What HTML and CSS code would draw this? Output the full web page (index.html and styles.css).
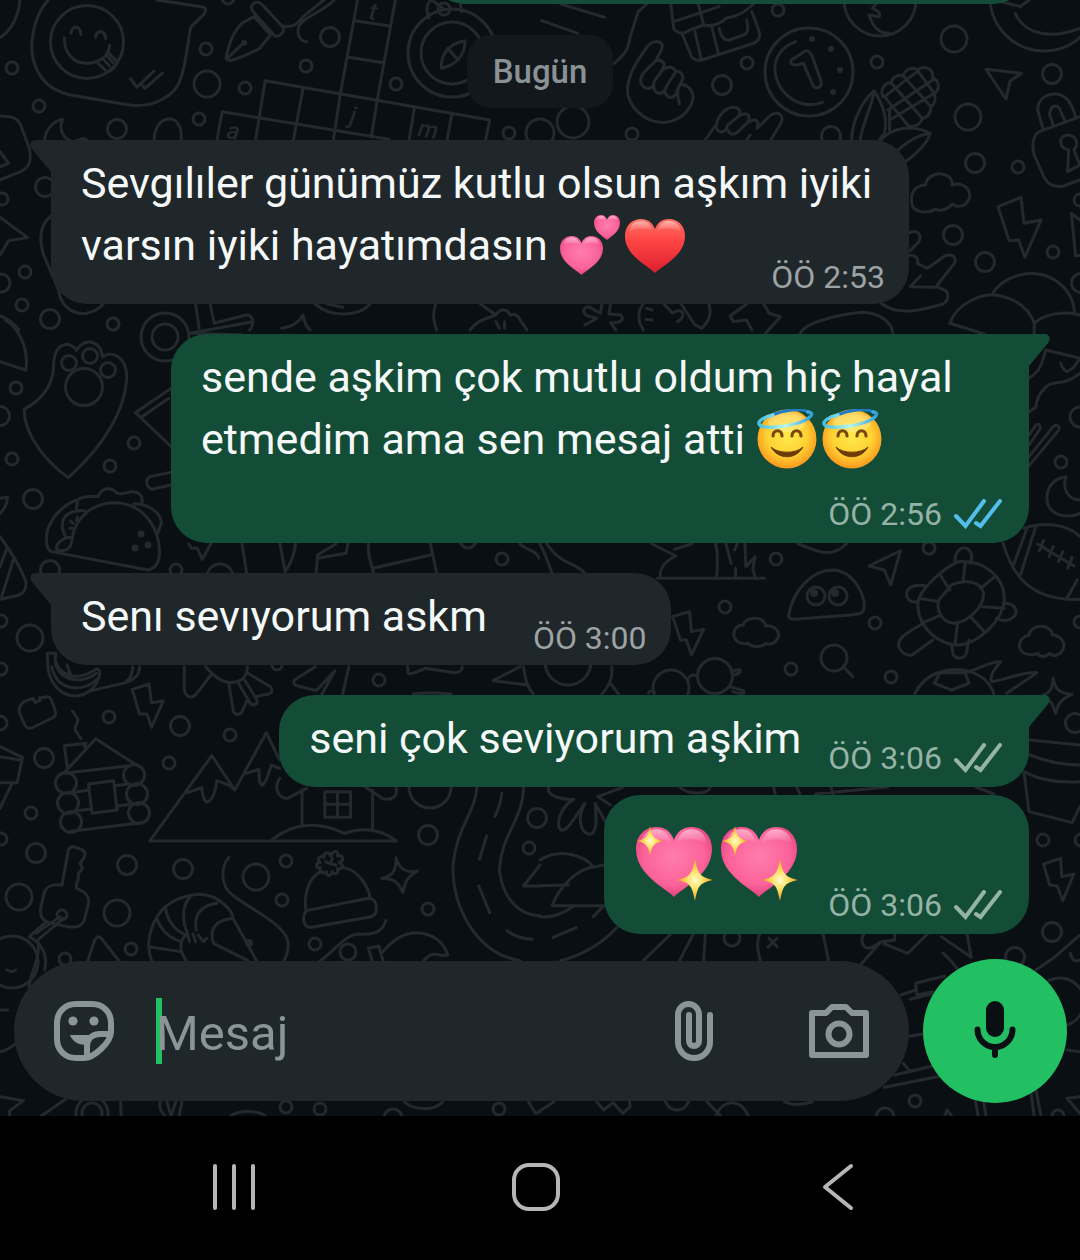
FILE: index.html
```html
<!DOCTYPE html>
<html lang="tr">
<head>
    <meta charset="UTF-8">
    <meta name="viewport" content="width=device-width, initial-scale=1.0">
    <title>Sohbet</title>
    <link rel="stylesheet" href="styles.css">
</head>
<body>
    <!-- Shared emoji and icon shapes -->
    <svg class="sprite" aria-hidden="true">
        <defs>
            <radialGradient id="pinkFill" cx="50%" cy="42%" r="62%">
                <stop offset="0" stop-color="#ff7dab"/>
                <stop offset="0.65" stop-color="#fb639a"/>
                <stop offset="1" stop-color="#e03a78"/>
            </radialGradient>
            <linearGradient id="redFill" x1="0" y1="0" x2="0" y2="1">
                <stop offset="0" stop-color="#ff6f63"/>
                <stop offset="0.4" stop-color="#ff4545"/>
                <stop offset="1" stop-color="#dc1f2e"/>
            </linearGradient>
            <linearGradient id="shine" x1="0" y1="0" x2="0" y2="1">
                <stop offset="0" stop-color="#fff" stop-opacity="0.5"/>
                <stop offset="1" stop-color="#fff" stop-opacity="0"/>
            </linearGradient>
            <radialGradient id="faceFill" cx="50%" cy="45%" r="56%">
                <stop offset="0" stop-color="#ffe94a"/>
                <stop offset="0.6" stop-color="#ffd233"/>
                <stop offset="1" stop-color="#f9951c"/>
            </radialGradient>
            <radialGradient id="starFill">
                <stop offset="0" stop-color="#fffbd0"/>
                <stop offset="0.4" stop-color="#ffe36b"/>
                <stop offset="1" stop-color="#eda11c"/>
            </radialGradient>
            <linearGradient id="haloFill" x1="0" y1="0" x2="1" y2="0">
                <stop offset="0" stop-color="#45bfe0"/>
                <stop offset="0.5" stop-color="#b8f6ea"/>
                <stop offset="1" stop-color="#2f9fdc"/>
            </linearGradient>
        </defs>
        <symbol id="heart" viewBox="0 0 100 92" preserveAspectRatio="none">
            <path d="M50 92C42 82 0 64 0 29C0 11 12 0 27 0C38 0 46 6 50 17C54 6 62 0 73 0C88 0 100 11 100 29C100 64 58 82 50 92Z"/>
        </symbol>
        <symbol id="heartShine" viewBox="0 0 100 92" preserveAspectRatio="none">
            <path fill="url(#shine)" d="M7 22C8 9 17 3 27 3C37 3 43 9 46 20C34 14 18 15 7 22ZM54 20C57 9 63 3 73 3C83 3 92 9 93 22C82 15 66 14 54 20Z"/>
        </symbol>
        <symbol id="twoHearts" viewBox="0 0 65 60">
            <g fill="url(#pinkFill)">
                <use href="#heart" x="2" y="21" width="43" height="39"/>
                <use href="#heart" x="36" y="0" width="26" height="25"/>
            </g>
            <use href="#heartShine" x="2" y="21" width="43" height="39"/>
            <use href="#heartShine" x="36" y="0" width="26" height="25"/>
        </symbol>
        <symbol id="redHeart" viewBox="0 0 65 60">
            <use href="#heart" fill="url(#redFill)" x="2" y="4" width="60" height="54"/>
            <use href="#heartShine" x="2" y="4" width="60" height="54"/>
        </symbol>
        <symbol id="angel" viewBox="0 0 65 60">
            <circle cx="31" cy="30" r="29.5" fill="url(#faceFill)"/>
            <ellipse cx="31" cy="13" rx="19" ry="10" fill="#fff" opacity="0.25"/>
            <path d="M17 27C17 20 26 20 26 27M36 27C36 20 45 20 45 27" fill="none" stroke="#7a4708" stroke-width="3.2" stroke-linecap="round"/>
            <path d="M15 38C22 51 40 51 47 38C40 45 22 45 15 38Z" fill="#6b3c05" stroke="#6b3c05" stroke-linejoin="round"/>
            <path d="M16 6C28 1 44 -1 53 3" fill="none" stroke="#1f7cc4" stroke-width="3"/>
            <path d="M52 3C60 4 54 10 42 14C26 19 5 20 3 15C2 12 8 8 17 6" fill="none" stroke="url(#haloFill)" stroke-width="3.4" stroke-linecap="round"/>
        </symbol>
        <symbol id="sparklingHeart" viewBox="0 0 85 80">
            <use href="#heart" fill="url(#pinkFill)" x="2" y="4" width="76" height="70"/>
            <use href="#heartShine" x="2" y="4" width="76" height="70"/>
            <path fill="url(#starFill)" d="M16 3C18 14 20 16 29 18C20 20 18 22 16 33C14 22 12 20 3 18C12 16 14 14 16 3Z"/>
            <path fill="url(#starFill)" d="M61 36C64 51 66 54 79 57C66 60 64 62 61 78C58 62 56 60 43 57C56 54 58 51 61 36Z"/>
        </symbol>
        <symbol id="ticks" viewBox="0 0 48 30">
            <path d="M2 17L11.5 27L30 2M22 24L26.5 27L46 2" fill="none" stroke="currentColor" stroke-width="4" stroke-linecap="round"/>
        </symbol>
    </svg>

    <main class="chat">
        <svg class="wallpaper" viewBox="0 0 1080 1116" preserveAspectRatio="xMidYMax slice" aria-hidden="true">
            <g id="bubbles"></g>

            <g transform="scale(.3444 .3333)">
                <path d="M140 0C105 40 95 90 92 135C92 210 130 270 205 285L375 315C440 325 510 290 525 235C540 190 545 130 552 90L555 80L593 42C600 30 598 22 585 20L455 0"/>
                <path d="M206 100C210 75 232 75 235 103M277 112C282 88 303 88 307 116M187 113C185 160 215 190 250 190C290 190 318 165 318 135M285 190L310 215C325 215 340 195 340 185L312 155M300 178L318 198M308 165L328 188"/>
                <path d="M379 236L397 262L447 213M414 256L421 265L472 219M58 0C55 50 30 95 0 113"/>
                <path d="M657 170C665 130 680 90 705 68L738 50L785 105L752 147C725 160 695 175 672 181C660 182 655 178 657 170ZM663 172L702 134M735 12C745 2 757 8 765 18L822 82C828 95 812 112 798 108L735 35C728 27 728 18 735 12ZM825 78C850 85 865 70 880 50L940 0M970 0C940 35 880 50 867 80C862 105 870 122 890 125"/>
                <path d="M1038 0L988 283L968 420M1148 0L1095 302L1078 412M1030 62L1132 78M1012 172L1113 188M770 242L1422 360L1410 420M770 242L742 420M880 265L852 420M645 335L1130 418M645 335L630 420M1203 323L1188 420M1312 343L1298 420"/>
                <path d="M1245 55C1235 25 1240 5 1255 0M1340 35L1335 0M1260 5L1290 28M1282 205C1278 170 1300 130 1350 122C1350 160 1335 190 1282 205ZM1300 145L1330 180"/>
                <path d="M130 420C130 395 150 365 182 358C168 390 185 420 215 425L240 415L252 420M447 420C450 370 475 355 495 357C520 360 528 390 526 420"/>
                <path d="M0 348C30 348 50 352 60 375L85 445C92 480 88 500 60 515L0 540M0 455L25 490L0 500M0 652L80 713L25 722L0 765M148 648C120 670 112 710 125 760L170 870C175 920 215 945 250 940C275 935 290 925 300 912M0 948C20 955 40 970 55 990"/>
                <path d="M568 912L578 985M610 912L622 970L715 945C735 945 740 970 725 990M550 1000L700 1004M818 985C850 980 870 965 880 945C883 965 888 980 900 990M915 912C960 955 1040 950 1075 912M950 912L995 922M1265 912C1255 940 1260 970 1268 990M1365 990C1390 955 1420 955 1440 945C1450 925 1475 925 1480 945C1500 940 1505 950 1510 960L1530 990M1395 912L1440 945M1440 965L1450 985M1465 965V985"/>
            </g>

            <g transform="translate(540 0) scale(.3444 .3333)">
                <path d="M60 12L188 52M5 62L110 100M215 190C250 160 255 150 262 110L285 35L310 12"/>
                <path d="M305 150C270 200 250 240 255 285C270 340 320 370 365 367C410 360 440 330 445 290C440 262 420 250 405 255M305 150C320 122 345 118 355 135C355 155 340 170 335 183C320 200 290 220 292 245C300 270 325 272 330 250C335 230 365 210 360 190C350 178 340 180 335 183M330 250C328 280 350 290 362 270C370 250 385 230 395 215C385 195 365 200 350 215M362 270C365 295 385 300 395 280C400 262 415 245 415 230C410 215 400 212 395 215M405 255C395 275 400 295 405 312"/>
                <path d="M380 12L388 85C400 105 425 100 435 90L475 75C500 80 520 75 540 55C570 50 590 40 620 12M388 65L520 20M460 12L475 75M412 100L440 170C445 180 455 182 470 180L620 130C638 120 640 110 635 90L615 35M450 95L468 178M498 78L518 162M520 85C525 110 535 122 550 120L595 103C605 98 606 85 600 60"/>
                <path d="M742 125C690 145 675 190 685 230C700 290 760 330 820 307M730 180L770 153C778 150 785 158 790 168L815 240C822 262 800 272 792 255L765 190L745 195C730 195 725 188 730 180Z"/>
                <path d="M480 420L510 375M512 385C510 350 540 320 565 322C580 325 585 335 575 350C605 330 615 350 600 370C620 355 640 355 630 385L670 345C690 332 710 345 700 368L670 420M512 385C525 405 540 395 545 375L575 350M545 390C550 405 565 405 575 395L600 370M610 405L600 420"/>
                <path d="M955 45C970 90 990 100 1015 100M955 45L985 50C990 40 980 30 965 25L975 12M1380 40C1410 110 1490 115 1568 85M1320 0L1395 20L1420 0"/>
                <path d="M995 290C985 260 1010 245 1020 250C1020 230 1045 222 1055 228C1060 205 1085 200 1095 210C1115 195 1145 205 1140 235C1160 240 1162 270 1145 280C1150 300 1145 315 1135 320C1135 345 1120 355 1110 355C1105 375 1085 382 1070 378M1000 290L1070 378M1020 250L1110 355M1055 228L1135 320M1095 210L1145 280M1095 215L1000 290M1140 240L1010 330M1145 280L1015 360"/>
                <path d="M905 420C905 370 930 310 970 272C1000 320 1010 360 1000 400L985 420M970 272C965 320 935 370 930 420M990 420C1020 385 1080 370 1133 400C1125 430 1090 465 1060 485M1015 390V330M1133 400C1090 405 1060 430 1035 455"/>
                <path d="M1295 208L1398 220L1365 243L1353 297Z"/>
                <path d="M1460 385L1445 330C1445 290 1480 280 1500 282C1530 285 1545 310 1555 350M1490 375L1480 345C1480 315 1505 310 1510 330L1525 365M1568 350L1450 395C1430 405 1428 440 1435 465L1465 535C1480 560 1500 562 1520 558L1568 540M1532 515L1535 450C1510 445 1500 410 1530 405C1560 405 1565 435 1550 450L1568 495L1532 515"/>
                <path d="M1120 555C1120 530 1150 520 1165 522C1190 525 1198 540 1197 555C1225 545 1250 565 1248 590C1240 620 1215 625 1197 612C1185 630 1160 635 1148 627C1130 640 1095 640 1082 620C1070 580 1090 555 1120 555Z"/>
                <path d="M1330 620L1397 592L1405 670L1455 660L1408 772L1390 720L1362 722ZM1568 660L1543 640L1555 768L1568 765"/>
                <path d="M1070 700C1095 685 1110 705 1100 725L1075 752M1070 765C1095 765 1100 780 1095 790L1125 805L1175 768C1200 758 1210 775 1203 790L1150 860L1175 870C1190 880 1185 905 1170 912C1110 930 1040 950 990 910M1105 828L1075 860L1150 862"/>
                <path d="M1312 885C1340 830 1420 805 1480 832C1530 855 1550 900 1552 938M1190 970C1210 910 1290 870 1345 890C1400 905 1425 940 1435 970C1460 945 1520 930 1568 945M1190 970L1290 1002M1435 970V1004"/>
                <path d="M180 912L175 940L140 920C120 925 125 945 145 950L165 955L130 975M205 912L200 942L235 945C245 960 235 970 205 968L220 990M300 912C285 930 285 950 290 970L300 990M360 912L385 940C410 920 430 945 400 965M310 925L325 930M308 958L325 960M410 912L450 975L470 985C495 960 498 935 490 912M600 912L552 948L562 965L600 960L615 990M650 912L665 940L698 950L655 1000M755 1002C770 960 900 940 940 937C980 940 1020 960 1025 1000"/>
            </g>

            <g transform="translate(0 320) scale(.3444 .3333)">
                <path d="M15 0C50 20 85 80 75 150L0 125M70 268C120 240 150 200 155 150C155 100 165 75 195 73C210 75 220 85 222 92C240 55 290 55 298 110C325 90 368 110 368 170C365 270 300 380 198 473C140 430 70 350 70 268Z"/>
                <path d="M550 40L735 5M497 205L393 278L497 380M490 235L410 292M497 457L435 470C420 480 425 500 440 508L497 495"/>
                <path d="M0 535L22 532C20 555 10 570 0 580M0 650C35 700 60 740 75 785C78 810 65 825 45 828L0 838M20 685L0 740M40 715L5 830"/>
                <path d="M150 695C130 690 132 640 142 620C160 575 200 545 225 540C240 525 270 530 285 530C295 500 325 500 340 520C360 525 370 515 385 515C410 515 415 535 412 548M388 552C430 550 470 580 468 610L458 640M150 695L430 750C455 745 462 725 463 700C465 630 420 550 335 548C260 548 215 600 208 665C205 690 185 695 165 690C160 670 180 655 205 652M225 545L222 565M190 650C170 610 180 570 245 572M205 603L212 610M225 592L222 600M203 625H210"/>
                <path d="M548 672L556 685H573L587 718L612 672M703 672L716 760M813 672L828 755C845 730 855 700 858 672M918 760L922 705L975 672M922 715L1005 700L1010 672M1070 672C1065 700 1080 740 1085 760M1250 672L1268 760M1083 745L1250 705M1510 672C1525 690 1560 690 1565 715"/>
            </g>

            <g transform="translate(540 320) scale(.3444 .3333)">
                <path d="M1420 175C1440 160 1455 150 1468 90L1568 115C1560 130 1545 150 1530 155C1520 150 1515 140 1512 130M1568 160C1520 200 1490 180 1470 200C1450 220 1440 240 1440 262L1420 275M1420 345L1440 315C1450 308 1455 320 1450 330L1420 375M1420 410L1490 320C1500 310 1512 320 1505 332L1420 437"/>
                <path d="M1527 470C1480 475 1465 520 1475 555C1490 590 1535 595 1568 580M1527 470C1515 510 1535 540 1568 540"/>
                <path d="M1345 670C1370 760 1420 845 1568 838M1405 625C1460 605 1530 610 1568 650M1415 622L1375 735M1440 618L1395 765M1445 672L1550 738M1462 662L1450 692M1490 680L1478 710M1518 695L1505 725M1545 712L1532 745M1560 780L1530 835"/>
                <path d="M1215 725C1300 720 1350 780 1348 840C1345 900 1270 980 1200 975C1130 960 1095 900 1097 850C1100 810 1170 745 1215 725ZM1195 795C1230 780 1280 780 1288 820C1290 860 1240 910 1200 910C1165 905 1150 870 1158 840ZM1235 727L1228 785M1320 770L1280 805M1348 865L1285 860M1290 935L1250 890M1205 972L1212 912M1108 910L1165 885M1100 835L1158 845M1162 765L1190 810"/>
                <path d="M1205 725C1205 690 1225 680 1240 685C1255 695 1257 710 1250 730M1120 798C1085 790 1060 805 1065 828C1070 845 1085 848 1098 845M1345 852C1370 845 1385 865 1382 880C1370 905 1345 905 1325 895M1105 915C1060 940 1035 960 1042 980C1050 1005 1075 1010 1085 1002L1140 960M1195 975L1200 1005C1210 1020 1235 1015 1238 1000L1245 960"/>
                <path d="M722 885C735 810 790 750 850 750C910 752 950 830 940 870C935 882 920 883 900 885L740 898C728 898 720 893 722 885ZM955 738L1047 692L1018 795L1000 750Z"/>
                <path d="M325 672L395 708C360 725 345 750 350 775M340 775H652M510 672C518 700 515 740 513 772M540 672L555 730M568 745V772M565 690L572 672M595 672L598 740L625 710L618 745L625 775M750 672C800 690 840 720 890 672M0 672C15 700 25 730 35 760M20 672C60 735 110 730 130 760M390 688L440 672"/>
                <path d="M385 890L434 875L440 935L475 928L440 1005L425 960L408 960ZM590 915C595 890 650 885 655 918C680 915 700 935 690 955C685 970 665 975 655 970C640 985 610 980 605 970C585 975 565 965 563 945C562 925 575 915 590 915ZM1420 945C1425 910 1485 910 1488 945C1510 945 1525 965 1520 985C1510 1010 1490 1010 1480 1000C1465 1015 1450 1010 1445 1000C1420 1010 1395 1000 1392 980C1392 960 1405 948 1420 945Z"/>
            </g>

            <g transform="translate(0 640) scale(.3444 .3333)">
                <path d="M137 40H162L160 60C170 100 215 130 275 90C290 80 292 100 288 110C265 190 160 190 140 90ZM160 70C180 130 240 130 280 100M150 80C165 155 240 160 285 115M195 75L205 105M265 152L365 128C395 118 405 100 405 80M385 80C385 100 380 115 365 125"/>
                <path d="M70 185L95 175L103 188L118 180L115 173L130 172C145 165 150 180 155 195L162 220C162 232 150 235 140 240L92 264C80 268 75 262 70 250L55 215C55 200 60 192 70 185ZM210 213L225 235C230 250 215 255 218 270L235 296M384 148L433 132L440 188L474 183L440 262L427 222L405 222Z"/>
                <path d="M535 80V150C540 175 560 175 570 162L612 105M597 80C630 120 665 140 700 120C715 110 718 95 718 80M665 135L678 215C685 228 700 225 705 210L718 180M690 125L728 192C740 200 750 190 745 178L712 122M720 100L785 140C795 155 785 165 770 163L745 170"/>
                <path d="M915 80L855 120C850 130 855 135 865 138L918 152L972 92L935 162M1013 80L995 162M1183 80L1185 100C1195 105 1210 95 1235 85L1320 98C1335 98 1342 90 1342 80M1510 80L1432 122L1530 135M1520 80C1525 115 1530 140 1548 162M1200 162C1230 158 1270 158 1310 162"/>
                <path d="M187 317L250 310L245 320M187 317L195 380M185 400L278 296L400 378M185 400L370 378M217 457L258 450M332 437L370 433M222 512L265 507M340 498L380 493M257 432L330 422L340 510L267 520ZM205 574L410 548"/>
                <path d="M435 603L615 347L682 450L773 278L812 360M435 603H1150M545 458L585 443C590 465 590 485 602 486C620 480 625 450 630 422L665 435L682 450M710 402L752 388C752 410 752 435 762 436C775 425 780 400 788 375L812 385"/>
                <path d="M877 450V555M1082 450V568M943 455H1018V532H943ZM980 455V532M943 493H1018M790 600C850 545 930 545 1000 580C1060 560 1110 570 1150 603M812 415C795 440 805 475 835 475L890 445M1060 440L1110 475C1140 485 1155 465 1150 445"/>
                <path d="M198 632C200 620 210 618 220 622L240 630C250 638 248 645 243 655L232 670L240 685L228 700C225 705 232 720 222 730V745C245 755 260 765 257 790L245 840C235 865 215 862 195 860L150 850C125 845 115 830 118 805L128 760C135 735 155 732 180 735ZM175 830L105 880M185 835L115 895M135 845L85 890L108 905M105 905C135 930 135 970 130 990"/>
                <path d="M440 962C425 920 430 860 470 810C500 780 540 765 580 763C640 765 680 820 675 832L745 962M455 835C470 880 500 895 525 905M480 800C485 840 505 870 540 885M555 768C525 795 530 850 545 880M630 790C590 795 560 820 570 870M675 835C630 840 605 865 620 910L720 962M440 922L525 935M545 880C520 900 520 930 540 962M545 885L550 905M560 882L568 905M575 885L590 905L600 895"/>
                <path d="M665 652C640 680 640 740 675 765C730 810 820 850 835 900C842 930 830 950 825 962"/>
                <path d="M888 810C880 745 910 700 935 695M998 683C1040 690 1070 740 1075 775M890 812L1070 775C1092 775 1095 800 1092 815C1090 825 1080 830 1070 832L905 862C880 865 875 830 890 812M930 683C915 685 915 668 930 668C918 655 928 645 940 652C940 635 955 635 960 648C968 630 985 630 980 648C998 645 1000 660 985 668C1000 675 995 690 980 685C985 702 970 708 965 695C960 712 945 708 948 695C935 705 925 695 930 683ZM945 665L955 670M965 655L960 668M975 675L962 672"/>
                <path d="M1150 653C1160 690 1180 700 1212 693C1180 712 1175 730 1170 758C1155 725 1145 715 1108 716C1145 705 1150 690 1150 653Z"/>
                <path d="M930 962C970 935 1000 885 1040 882C1080 885 1110 880 1120 842M1080 962L1070 925L1100 918L1112 962M1112 935C1140 900 1170 878 1210 878C1260 880 1290 910 1300 945C1280 955 1260 925 1230 962M255 962L275 900C285 885 290 890 298 900L345 962"/>
                <path d="M1385 440C1380 520 1325 560 1315 680C1315 800 1380 940 1510 962M1520 440C1520 540 1455 580 1450 690C1460 780 1510 825 1568 828M1457 460C1455 490 1445 510 1437 530M1413 588L1392 658M1390 738L1422 818M1472 872C1495 890 1520 897 1545 898M1568 675L1520 738H1568"/>
                <path d="M0 320L65 352L50 428H0M0 350L60 360M35 430L0 505"/>
            </g>

            <g transform="translate(540 640) scale(.3444 .3333)">
                <path d="M205 130L228 162M208 80C212 110 200 140 180 162M432 115C435 105 445 103 457 108M556 95L578 88C585 95 580 102 560 105M550 140L590 152C598 160 590 165 560 155M315 160C315 152 325 152 332 155M880 80L908 110"/>
                <path d="M1088 162C1120 90 1200 80 1250 95C1290 110 1310 135 1318 162M1145 130L1162 98H1235L1245 130L1195 150ZM1240 95C1270 90 1300 65 1338 65C1320 85 1305 110 1312 125C1350 120 1400 95 1443 98L1355 160"/>
                <path d="M1490 115C1495 150 1510 160 1545 163C1515 175 1505 190 1497 220C1490 195 1485 175 1450 170C1480 160 1488 150 1490 115Z"/>
                <path d="M1422 300L1568 315M1422 345C1470 365 1520 375 1568 375M1405 395C1450 420 1500 430 1568 425M1405 395L1420 515L1545 548L1568 500M1462 672L1512 655L1515 710L1550 702L1518 782L1502 738L1480 735Z"/>
                <path d="M25 445C20 465 60 480 98 478C60 500 45 550 60 570C80 575 95 540 130 490C105 540 120 580 145 583C165 580 165 540 160 490L190 545M205 495L168 470L240 442"/>
                <path d="M0 660C60 620 130 650 155 680C110 690 60 730 35 797H185M155 682L185 675M0 737L82 735M185 797L155 830M0 830C30 835 70 820 95 800M38 892L105 863M60 962C140 940 190 900 225 860M300 962L380 882M405 962L445 882M480 882L475 962"/>
                <path d="M640 962C630 930 630 900 638 882M665 895L688 920M688 895L662 922M822 882L838 962M940 882C930 900 935 925 955 925C975 920 985 905 990 905L930 975M990 905L1030 900V882M1000 912L1068 940L1125 882M1240 882L1252 952L1165 890M1170 940C1190 955 1205 980 1215 990M1568 885L1490 955L1440 990"/>
                <path d="M405 441C430 465 490 465 495 441M678 441L683 462M745 441L755 462M800 462L1010 441M845 441L850 462M1265 441L1318 462"/>
            </g>

            <g transform="translate(0 940) scale(.3444 .3333)">
                <path d="M0 470L68 482L28 512V528M120 528L190 478M350 486L352 528M465 486C460 500 470 520 480 528M485 486L497 528L510 486M528 486L520 528M670 528C690 510 750 510 770 528M1175 486C1200 510 1260 515 1285 486M1535 486L1555 520L1568 515M0 335C30 330 60 300 75 280M110 0C120 60 80 110 85 150M20 90C30 95 40 95 45 90M0 210H22"/>
            </g>

            <g transform="translate(540 940) scale(.3444 .3333)">
                <path d="M1048 165L1090 150M1175 108L1090 130L1095 165L1140 155M1075 178L1145 160M1065 290L1110 282M1030 405L1140 378M1000 442L1165 408M1055 370L1075 395M1265 485L1272 528M1288 485L1295 528M1425 455L1435 528M1440 450L1455 528M1175 528L1182 510L1195 528M1568 470L1530 475L1568 520M165 486L185 510L212 488L240 520L262 500L260 486M485 486L525 528M510 528C530 480 580 470 605 528M710 486C730 495 760 495 790 486M0 512L40 486M1530 330L1568 335M1540 40C1545 65 1560 65 1568 60"/>
            </g>

            <g class="doodle-text">
                <text x="368" y="19" transform="rotate(9 368 19)">t</text>
                <text x="226" y="138" transform="rotate(9 226 138)">a</text>
                <text x="349" y="123" transform="rotate(9 349 123)">j</text>
                <text x="417" y="136" transform="rotate(9 417 136)">m</text>
            </g>
        </svg>

        <section class="messages">
            <div class="bubble sent previous"></div>
            <div class="day">Bugün</div>

            <div class="bubble received tail wrap">
                <p class="text">Sevgılıler günümüz kutlu olsun aşkım iyiki varsın iyiki hayatımdasın <svg class="emoji" role="img" aria-label="💕"><use href="#twoHearts"/></svg><svg class="emoji" role="img" aria-label="❤️"><use href="#redHeart"/></svg></p>
                <div class="meta"><time>ÖÖ 2:53</time></div>
            </div>

            <div class="bubble sent tail wrap">
                <p class="text">sende aşkim çok mutlu oldum hiç hayal etmedim ama sen mesaj atti <svg class="emoji" role="img" aria-label="😇"><use href="#angel"/></svg><svg class="emoji" role="img" aria-label="😇"><use href="#angel"/></svg></p>
                <div class="meta"><time>ÖÖ 2:56</time><svg class="ticks read" role="img" aria-label="Okundu"><use href="#ticks"/></svg></div>
            </div>

            <div class="bubble received tail">
                <p class="text">Senı sevıyorum askm</p>
                <div class="meta"><time>ÖÖ 3:00</time></div>
            </div>

            <div class="bubble sent tail">
                <p class="text">seni çok seviyorum aşkim</p>
                <div class="meta"><time>ÖÖ 3:06</time><svg class="ticks" role="img" aria-label="İletildi"><use href="#ticks"/></svg></div>
            </div>

            <div class="bubble sent grouped">
                <p class="big-emoji"><svg role="img" aria-label="💖"><use href="#sparklingHeart"/></svg><svg role="img" aria-label="💖"><use href="#sparklingHeart"/></svg></p>
                <div class="meta"><time>ÖÖ 3:06</time><svg class="ticks" role="img" aria-label="İletildi"><use href="#ticks"/></svg></div>
            </div>
        </section>

        <form class="composer">
            <div class="composer-box">
                <button type="button" class="icon-button" aria-label="Çıkartmalar">
                    <svg viewBox="0 0 60 60">
                        <path class="line" d="M57 31V22C57 11 49 3 38 3H22C11 3 3 11 3 22V38C3 49 11 57 22 57H30C40 57 57 41 57 31Z"/>
                        <path class="line" d="M33 55V46C33 38 38 33 46 33H56"/>
                        <path class="solid" d="M16 34H38L32 44C24 44 18 40 16 34Z"/>
                        <circle class="solid" cx="19" cy="20" r="4.6"/>
                        <circle class="solid" cx="40" cy="20" r="4.6"/>
                    </svg>
                </button>
                <div class="field">
                    <span class="caret"></span>
                    <input type="text" id="message" placeholder="Mesaj" aria-label="Mesaj">
                </div>
                <div class="actions">
                    <button type="button" class="icon-button" aria-label="Ekle">
                        <svg viewBox="0 0 60 60">
                            <path class="line" d="M46 14V41A16 16 0 0 1 14 41V13.5A10.5 10.5 0 0 1 35 13.5V40A5 5 0 0 1 25 40V14"/>
                        </svg>
                    </button>
                    <button type="button" class="icon-button" aria-label="Kamera">
                        <svg viewBox="0 0 60 60">
                            <path class="line" d="M3 12H17L23 6H37L43 12H57V54H3Z"/>
                            <circle class="line" cx="30" cy="33" r="10.5"/>
                        </svg>
                    </button>
                </div>
            </div>
            <button type="button" class="mic-button" aria-label="Sesli mesaj">
                <svg viewBox="0 0 60 60">
                    <rect class="solid" x="21" y="0" width="18" height="36" rx="9"/>
                    <path class="line" d="M12.500 28.500A17.500 17.500 0 0 0 47.500 28.500M30 46V54"/>
                </svg>
            </button>
        </form>
    </main>

    <nav class="system-nav">
        <button type="button" aria-label="Son uygulamalar">
            <svg viewBox="0 0 48 48"><path d="M5 3V45M24 3V45M43 3V45"/></svg>
        </button>
        <button type="button" aria-label="Ana ekran">
            <svg viewBox="0 0 48 48"><rect x="2" y="2" width="44" height="44" rx="15"/></svg>
        </button>
        <button type="button" aria-label="Geri">
            <svg viewBox="0 0 48 48"><path d="M37 3L11 24L37 45"/></svg>
        </button>
    </nav>

    <script>
        // Circles scattered over the wallpaper: x, y, radius
        const rings = [
            [12,68,6],[206,49,6],[330,37,9.5],[306,66,6],[207,84,13],[245,88,6],[39,106,6],[199,119,6],[117,129,9.5],[396,84,6],
            [509,133,6],[45,187,9.5],[2,199,6],[25,272,6],[1,283,9],[22,305,6],[50,319,9.5],[113,324,6],[228,-2,6],[444,9,6],
            [87,42,36.5],[452,53,44],[452,53,31],
            [778,10,6],[747,63,6],[722,85,9.5],[632,134,6],[573,122,16],[540,133,14],[877,62,6],[954,39,13],[1052,74,9.5],
            [968,117,13],[975,163,9.5],[1018,167,6],[831,136,9.5],[953,235,9.5],[985,262,9.5],[1053,252,6],[1081,283,9.5],
            [1080,200,6],[809,72,44],[880,0,36],[1044,-3,54],
            [16,388,6],[0,416,9.5],[134,443,6],[12,459,6],[110,466,6],[33,499,9.5],[176,570,6],[50,570,9.5],[220,577,13],
            [1,621,6],[30,638,13],[502,559,6],[468,540,8],[69,363,7.5],[90,356,7.5],[108,370,7.5],[84,387,18.5],[165,337,13],[165,337,24],
            [1061,462,6],[776,559,6],[929,548,6],[725,607,6],[875,623,6],[1080,622,6],[1080,417,10],[816,596,9],[838,596,9],
            [109,717,6],[180,726,9.5],[230,735,6],[44,758,9.5],[169,763,6],[31,813,6],[36,853,9.5],[127,865,9.5],[183,869,9.5],
            [256,877,13],[286,861,6],[282,900,6],[19,897,13],[117,913,13],[428,835,9.5],[428,909,6],[379,680,6],[315,944,6],
            [131,949,6],[65,959,6],[1,839,6],[0,723,7],[1,669,6],[529,848,6],[537,818,9.5],[430,787,21],[277,665,5],
            [66,783,10.5],[68,803,10.5],[71,822,10.5],[134,775,10.5],[137,794,10.5],[139,813,10.5],[62,915,5],[348,952,8],[12,962,26],
            [791,669,6],[891,677,6],[834,658,13],[671,688,18],[715,676,17.5],[1043,840,6],[1052,932,9.5],[1015,957,9.5],
            [1075,723,9.5],[1081,840,6],[732,938,8],[568,662,23],
            [92,1113,16],[92,1113,10],[286,1107,6],[320,1109,6],[499,1109,6],[393,1118,9],
            [915,1101,6],[885,1117,9],[1058,1116,6],[677,1098,12],[1060,1002,24]
        ];
        // Filled dots use the same format
        const dots = [
            [812,39,3],[831,49,3],[840,70,3],[833,92,3],[141,534,3.5],[148,545,3.5],[135,548,3.5],[244,43,3],[249,943,4],
            [814,593,4],[835,593,4]
        ];

        function drawCircles(list, className) {
            const group = document.getElementById('bubbles');
            for (const [x, y, r] of list) {
                const circle = document.createElementNS('http://www.w3.org/2000/svg', 'circle');
                circle.setAttribute('cx', x);
                circle.setAttribute('cy', y);
                circle.setAttribute('r', r);
                circle.setAttribute('class', className);
                group.appendChild(circle);
            }
        }

        drawCircles(rings, 'ring');
        drawCircles(dots, 'dot');
    </script>
</body>
</html>
```
FILE: styles.css
```css
:root {
    --background: #0a0f13;
    --doodle: #23292d;
    --received: #1f272a;
    --sent: #144d37;
    --accent: #23c063;
    --muted: #8b9497;
}

* {
    box-sizing: border-box;
}

body {
    margin: 0;
    height: 100vh;
    display: flex;
    flex-direction: column;
    overflow: hidden;
    background: var(--background);
    color: #f5f8f8;
    font-family: Roboto, "Noto Sans", sans-serif;
}

button {
    padding: 0;
    border: none;
    background: none;
    cursor: pointer;
}

svg {
    display: block;
}

.sprite {
    position: absolute;
    width: 0;
    height: 0;
}

.chat {
    position: relative;
    flex: 1;
    min-height: 0;
    display: flex;
    flex-direction: column;
    justify-content: flex-end;
    overflow: hidden;
}

/* Wallpaper */
.wallpaper {
    position: absolute;
    inset: 0;
    width: 100%;
    height: 100%;
}

.wallpaper path,
.wallpaper .ring {
    fill: none;
    stroke: var(--doodle);
    stroke-width: 3px;
    stroke-linecap: round;
    stroke-linejoin: round;
    vector-effect: non-scaling-stroke;
}

.wallpaper .dot,
.doodle-text {
    fill: var(--doodle);
}

.doodle-text {
    font-size: 24px;
    font-style: italic;
    font-weight: 500;
}

/* Messages */
.messages {
    position: relative;
    display: flex;
    flex-direction: column;
    align-items: flex-start;
    padding: 0 51px 25px;
}

.bubble {
    position: relative;
    display: flex;
    align-items: flex-end;
    max-width: 858px;
    margin-top: 30px;
    padding: 12px 24px 8px 30px;
    border-radius: 36px;
}

.received {
    gap: 46px;
    background: var(--received);
}

.sent {
    align-self: flex-end;
    gap: 27px;
    padding-right: 27px;
    padding-bottom: 10px;
    background: var(--sent);
}

.previous {
    width: 600px;
    height: 92px;
}

.grouped {
    gap: 24px;
    margin-top: 8px;
}

.tail::before {
    content: "";
    position: absolute;
    top: 0;
    width: 42px;
    height: 32px;
    background: inherit;
    clip-path: path("M42 0H6C0 0 -1 5 2 9L21 32H42Z");
}

.received.tail {
    border-top-left-radius: 0;
}

.received.tail::before {
    left: -21px;
}

.sent.tail {
    border-top-right-radius: 0;
}

.sent.tail::before {
    right: -21px;
    transform: scaleX(-1);
}

.text {
    margin: 0;
    padding-bottom: 10px;
    font-size: 43px;
    line-height: 62px;
}

.sent .text {
    padding-bottom: 8px;
}

.wrap {
    flex-direction: column;
}

.wrap .text {
    align-self: flex-start;
    padding: 0;
}

.sent.wrap {
    gap: 25px;
}

.received.wrap {
    gap: 0;
}

.received.wrap .meta {
    margin-top: -18px;
}

.emoji {
    display: inline-block;
    width: 65px;
    height: 60px;
    vertical-align: -15px;
}

.big-emoji {
    display: flex;
    margin: 0;
    padding: 16px 0 21px;
}

.big-emoji svg {
    width: 85px;
    height: 80px;
}

.meta {
    display: flex;
    align-items: center;
    gap: 12px;
    color: #9da3a5;
    font-size: 32px;
    line-height: 38px;
    white-space: nowrap;
}

.sent .meta {
    color: #95b3a7;
}

.ticks {
    width: 48px;
    height: 30px;
}

.ticks.read {
    color: #53bdeb;
}

.day {
    align-self: center;
    margin: 31px 0 2px;
    padding: 18px 26px 17px;
    border-radius: 24px;
    background: #12181c;
    color: #8b9295;
    font-size: 33px;
    font-weight: 500;
    line-height: 38px;
}

/* Composer */
.composer {
    position: relative;
    display: flex;
    align-items: center;
    gap: 14px;
    padding: 0 13px 13px 14px;
}

.composer-box {
    flex: 1;
    min-width: 0;
    display: flex;
    align-items: center;
    gap: 42px;
    height: 140px;
    padding: 0 40px;
    border-radius: 70px;
    background: var(--received);
}

.icon-button {
    color: var(--muted);
}

.icon-button svg,
.mic-button svg {
    width: 60px;
    height: 60px;
}

.line {
    fill: none;
    stroke: currentColor;
    stroke-width: 6px;
    stroke-linecap: round;
    stroke-linejoin: round;
}

.solid {
    fill: currentColor;
}

.field {
    position: relative;
    flex: 1;
    min-width: 0;
}

.caret {
    position: absolute;
    top: 0;
    left: 0;
    width: 6px;
    height: 66px;
    background: var(--accent);
}

.field input {
    position: relative;
    display: block;
    width: 100%;
    height: 66px;
    padding: 4px 0 0;
    border: none;
    outline: none;
    background: transparent;
    color: #f5f8f8;
    font-family: inherit;
    font-size: 49px;
}

.field input::placeholder {
    color: var(--muted);
    opacity: 1;
}

.actions {
    display: flex;
    gap: 85px;
}

.mic-button {
    display: flex;
    align-items: center;
    justify-content: center;
    width: 144px;
    height: 144px;
    border-radius: 50%;
    background: var(--accent);
    color: var(--background);
}

/* Android navigation bar */
.system-nav {
    display: grid;
    grid-template-columns: repeat(3, 302px);
    justify-content: center;
    height: 144px;
    padding: 0 8px 2px 0;
    background: #000;
}

.system-nav button {
    display: flex;
    align-items: center;
    justify-content: center;
}

.system-nav svg {
    width: 48px;
    height: 48px;
    fill: none;
    stroke: #b6b6b6;
    stroke-width: 4px;
    stroke-linecap: round;
    stroke-linejoin: round;
}
```
